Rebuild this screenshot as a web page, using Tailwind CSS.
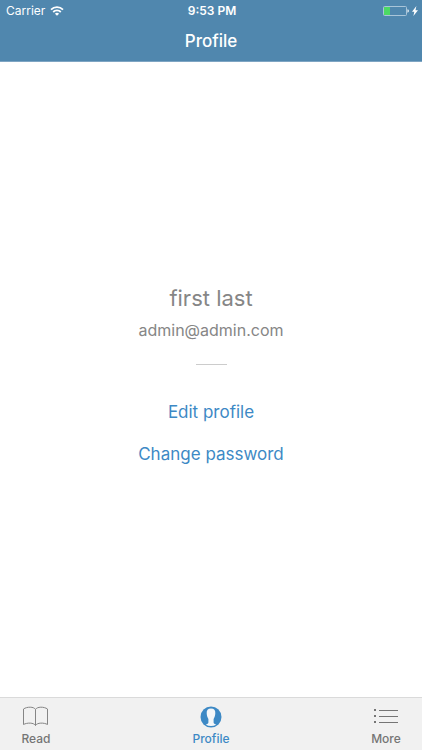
<!DOCTYPE html>
<html lang="en">
  <head>
    <meta charset="UTF-8" />
    <meta name="viewport" content="width=device-width, initial-scale=1.0" />
    <title>Profile</title>
    <script src="https://cdn.jsdelivr.net/npm/@tailwindcss/browser@4"></script>
  </head>
  <body class="flex h-screen flex-col bg-white font-['Inter','Liberation_Sans',sans-serif]">
    <header class="border-b border-[#7ea5c3] bg-[#5087ae] text-white">
      <!-- Status bar -->
      <div class="grid h-[22px] grid-cols-3 items-center pr-1 pl-[6px] text-xs">
        <div class="flex items-center gap-[5px]">
          <span>Carrier</span>
          <svg class="h-[10px] w-[14px]" viewBox="0 0 14 10" fill="none" stroke="currentColor" stroke-width="1.8">
            <path d="M1 3.7a8.5 8.5 0 0 1 12 0" />
            <path d="M3.2 6a5.4 5.4 0 0 1 7.6 0" />
            <path d="M7 9.8 4.9 7.7a3 3 0 0 1 4.2 0z" fill="currentColor" stroke="none" />
          </svg>
        </div>
        <span class="text-center font-semibold">9:53 PM</span>
        <div class="flex items-center justify-end gap-[3px]">
          <svg class="h-[10px] w-[26px]" viewBox="0 0 26 10">
            <rect x=".5" y=".5" width="23" height="9" rx="1" fill="none" stroke="#a9c5d9" />
            <rect x="1" y="1" width="6" height="8" fill="#4cd964" />
            <path d="M24.5 3.3q1.3.3 1.3 1.7t-1.3 1.7z" fill="#fff" />
          </svg>
          <svg class="h-[10px] w-[6px]" viewBox="0 0 6 10" fill="currentColor">
            <path d="M4.4 0 0 5.7h2.3L1.4 10 6 4.2H3.5z" />
          </svg>
        </div>
      </div>
      <h1 class="flex h-[39px] items-center justify-center text-[17px] font-medium">Profile</h1>
    </header>

    <main class="flex flex-1 flex-col items-center justify-center pb-[10px] text-[17px] text-[#868686]">
      <h2 class="text-[22px] leading-8">first last</h2>
      <p class="text-base leading-8">admin@admin.com</p>
      <hr class="mt-[18px] w-[31px] border-[#cccccc]" />
      <a href="#edit" class="mt-[33px] leading-7 text-[#3d89c5]">Edit profile</a>
      <a href="#password" class="mt-[14px] leading-7 text-[#3d89c5]">Change password</a>
    </main>

    <!-- Tab bar -->
    <nav class="flex h-[53px] justify-between border-t border-[#dadada] bg-[#f1f1f1] text-xs font-medium text-[#757575]">
      <a href="#read" class="flex w-[72px] flex-col items-center gap-[2px] pt-[7px]">
        <svg class="h-6 w-[26px]" viewBox="0 0 26 24" fill="none" stroke="#858585">
          <path d="M12.500 4.500C11 1.500 4 1.500 .5 4v15.500C4 17.500 11 17.500 12.500 20.500C14 17.500 21 17.500 24.500 19.500v-15.500C21 1.500 14 1.500 12.500 4.500z" />
          <path d="M12.500 4.500v16" />
        </svg>
        Read
      </a>
      <a href="#profile" class="flex w-[72px] flex-col items-center gap-[2px] pt-[7px] text-[#3d89c5]" aria-current="page">
        <svg class="h-6 w-6" viewBox="0 0 24 24">
          <circle cx="12" cy="12" r="10.5" fill="#3d89c5" />
          <path d="M12 3.500c-3.200 0-4.500 2-4.300 4.800.1 2.400.8 4.200 1.700 5.600v3.600c0 1.200-1.300 1.700-2.600 2.300 3.200 1.700 7.200 1.700 10.400 0-1.300-.6-2.600-1.100-2.600-2.300v-3.600c.9-1.400 1.600-3.200 1.700-5.600.2-2.800-1.100-4.800-4.300-4.800z" fill="#f4f7f9" />
        </svg>
        Profile
      </a>
      <a href="#more" class="flex w-[72px] flex-col items-center gap-[2px] pt-[7px]">
        <svg class="h-6 w-6" viewBox="0 0 24 24" fill="#757575">
          <path d="M0 4h2v2H0zM0 10h2v2H0zM0 16h2v2H0z" />
          <path d="M5 5h19v1H5zM5 11h19v1H5zM5 17h19v1H5z" />
        </svg>
        More
      </a>
    </nav>
  </body>
</html>
